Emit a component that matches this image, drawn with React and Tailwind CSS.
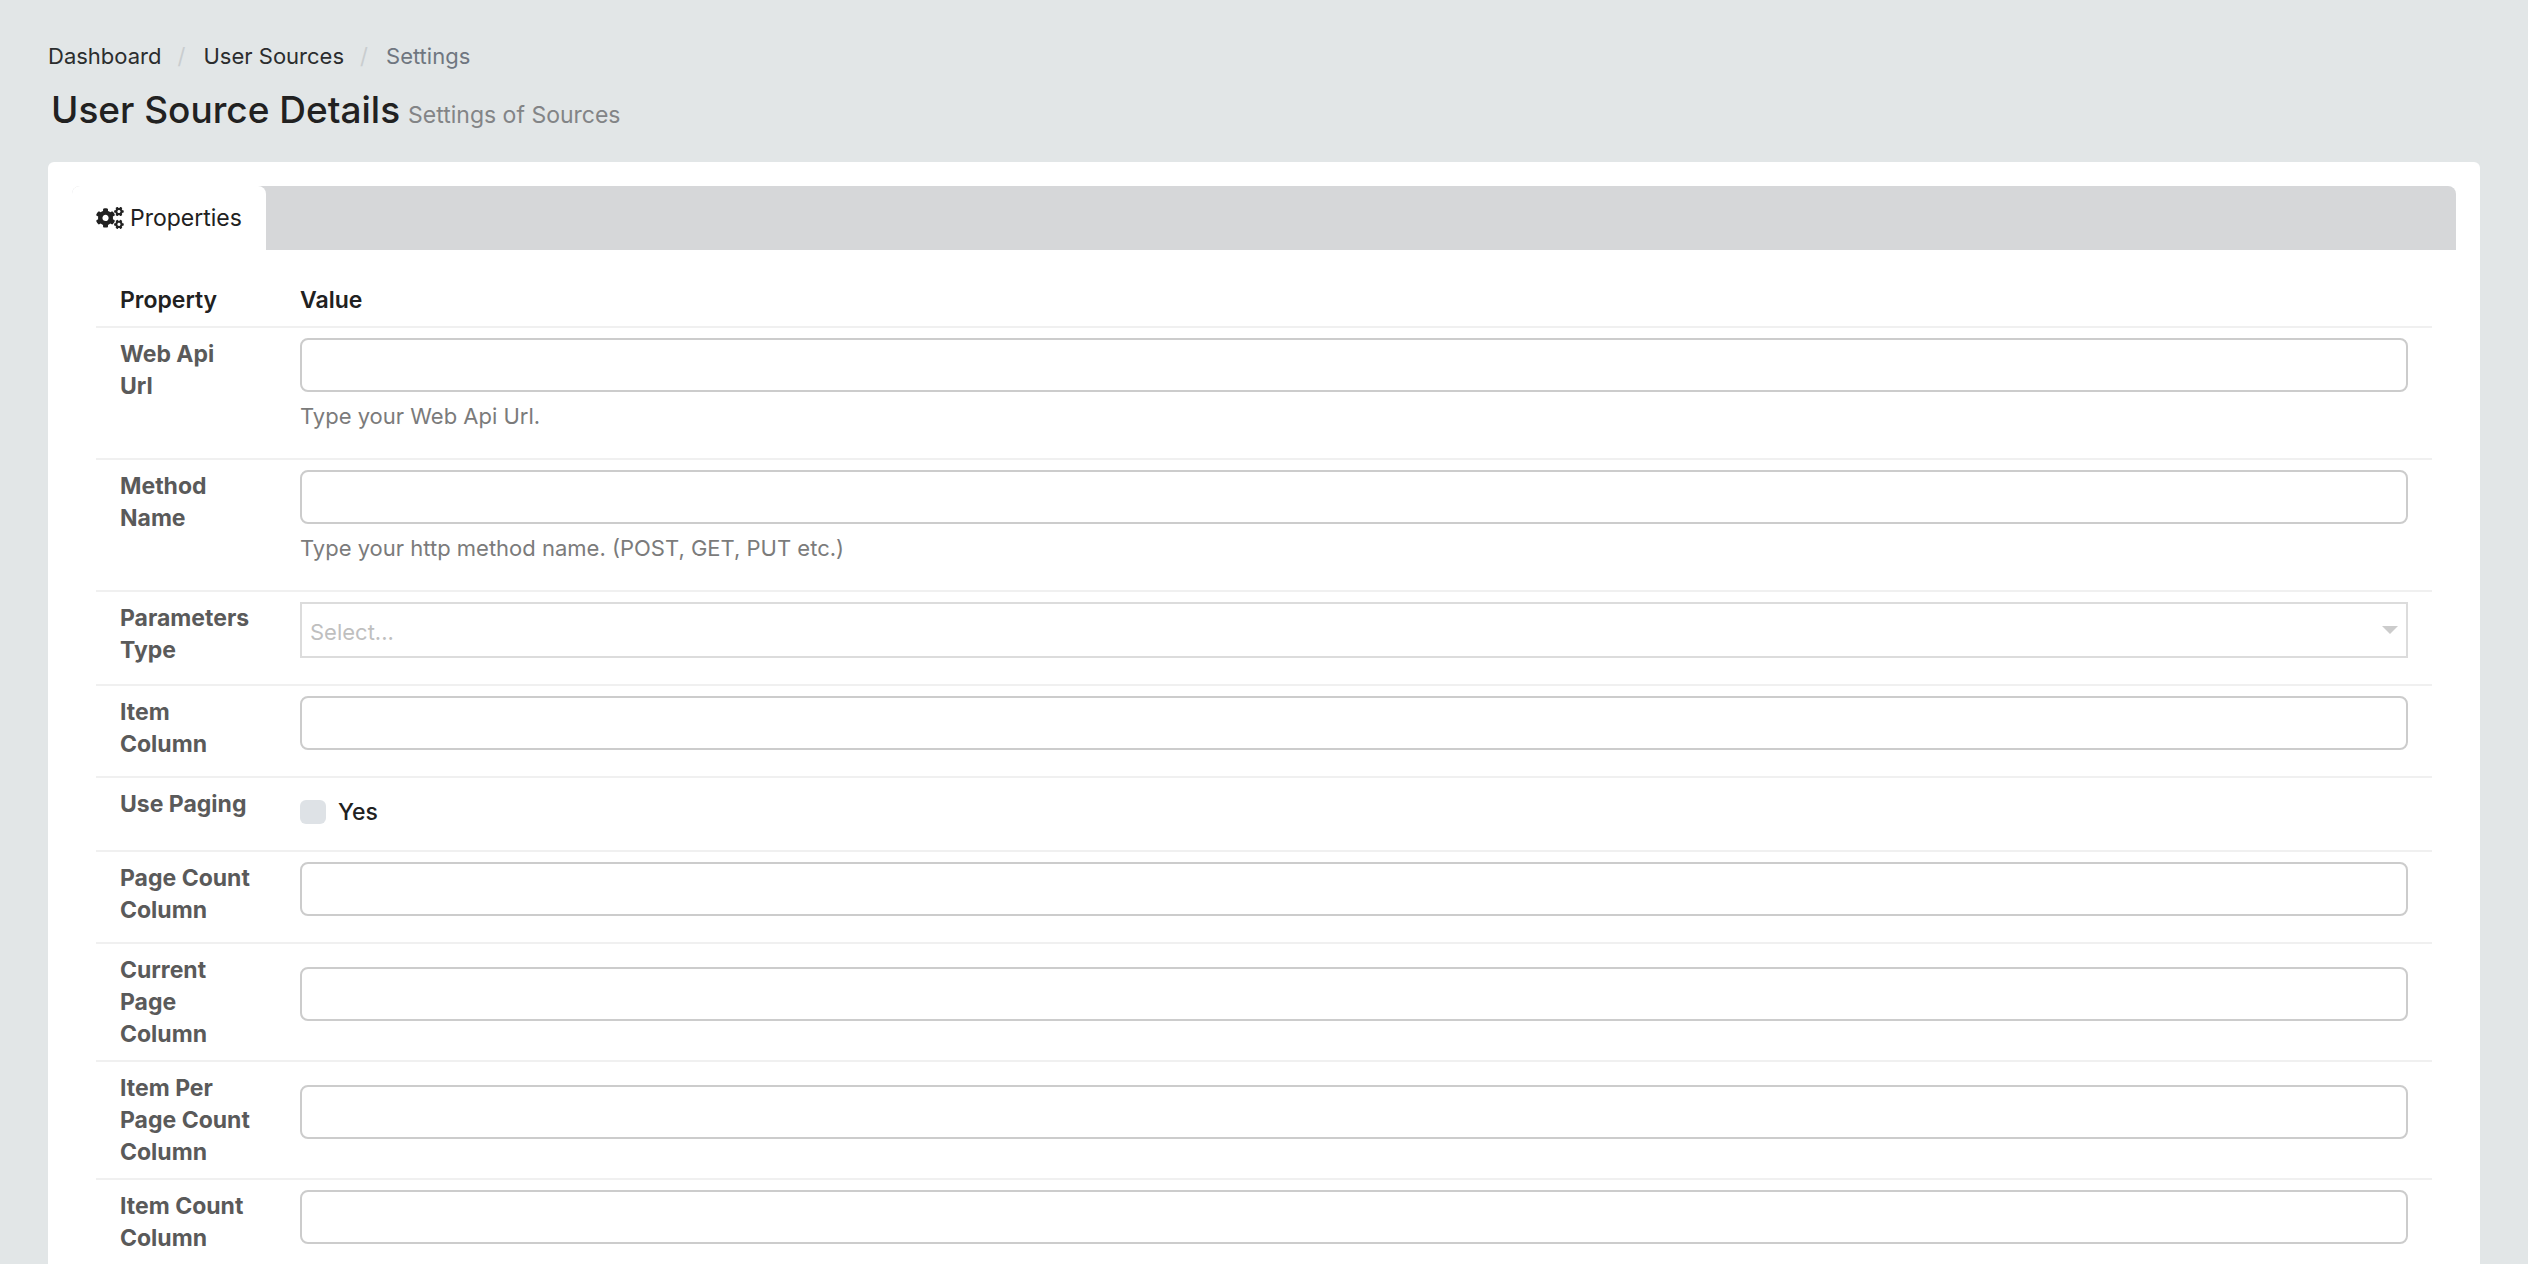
import { FaCogs } from "react-icons/fa"

const properties = [
  { id: "webApiUrl", label: "Web Api\nUrl", type: "text", hint: "Type your Web Api Url." },
  {
    id: "methodName",
    label: "Method Name",
    type: "text",
    hint: "Type your http method name. (POST, GET, PUT etc.)",
  },
  { id: "parametersType", label: "Parameters Type", type: "select" },
  { id: "itemColumn", label: "Item Column", type: "text" },
  { id: "usePaging", label: "Use Paging", type: "checkbox" },
  { id: "pageCountColumn", label: "Page Count Column", type: "text" },
  { id: "currentPageColumn", label: "Current Page Column", type: "text" },
  { id: "itemPerPageCountColumn", label: "Item Per Page Count Column", type: "text" },
  { id: "itemCountColumn", label: "Item Count Column", type: "text" },
]

function Breadcrumb() {
  return (
    <nav aria-label="breadcrumb">
      <ol className="flex text-[#2b2d2e]">
        <li>
          <a href="#dashboard">Dashboard</a>
        </li>
        <li className="flex">
          <span className="w-[42px] pl-4 text-[#c9cdcf]">/</span>
          <a href="#sources">User Sources</a>
        </li>
        <li className="flex text-[#6f7680]" aria-current="page">
          <span className="w-[42px] pl-4 text-[#c9cdcf]">/</span>
          Settings
        </li>
      </ol>
    </nav>
  )
}

function SelectField({ id }) {
  return (
    <div className="relative mb-4">
      <select
        id={id}
        defaultValue=""
        className="block w-full h-14 appearance-none border-2 border-[#dcdcdc] bg-white pl-2 pr-10 pt-1 text-[#bfbfbf] outline-none"
      >
        <option value="">Select...</option>
      </select>
      <svg
        className="absolute right-2.5 top-6 w-4 h-2 pointer-events-none"
        viewBox="0 0 16 8"
        fill="#cccccc"
      >
        <path d="M0 0h16L8 8z" />
      </svg>
    </div>
  )
}

function CheckboxField({ id }) {
  return (
    <label className="flex items-center gap-3 pt-2 pb-3 text-[23px] font-medium text-[#212121]">
      <input
        id={id}
        type="checkbox"
        className="w-[26px] h-6 appearance-none rounded-md bg-[#dee2e6] checked:bg-[#2196f3]"
      />
      Yes
    </label>
  )
}

function TextField({ id, hint }) {
  return (
    <div className="mb-4">
      <input
        id={id}
        type="text"
        className="block w-full h-[54px] rounded-lg border-2 border-[#cccccc] bg-white px-4 outline-none focus:border-[#8bbcf0]"
      />
      {hint && <p className="mt-2 text-[#7b7b7b]">{hint}</p>}
    </div>
  )
}

function PropertyRow({ id, label, type, hint }) {
  return (
    <tr className="border-t-2 border-[#f0f0f0]">
      <th
        scope="row"
        className="pl-6 pr-4 py-2.5 text-left align-top text-[23px] font-bold text-[#5a5a5a]"
      >
        <label htmlFor={id} className="block whitespace-pre-line">
          {label}
        </label>
      </th>
      <td className="px-6 py-2.5 align-middle">
        {type === "text" && <TextField id={id} hint={hint} />}
        {type === "select" && <SelectField id={id} />}
        {type === "checkbox" && <CheckboxField id={id} />}
      </td>
    </tr>
  )
}

export default function App() {
  return (
    <div className="min-h-screen bg-[#e2e6e7] px-12 pt-10 font-['Inter',sans-serif] text-[22px] leading-8 text-[#212121]">
      <Breadcrumb />

      <h1 className="flex items-baseline gap-2 px-[3px] pt-3.5 pb-7 text-[37px] leading-[48px] font-medium">
        User Source Details
        <small className="text-[23px] leading-8 font-normal text-[#828486]">
          Settings of Sources
        </small>
      </h1>

      <main className="rounded-md bg-white p-6">
        {/* TABS */}
        <div role="tablist" className="flex h-16 rounded-t-lg bg-[#d6d7d9]">
          <button
            type="button"
            role="tab"
            aria-selected="true"
            className="flex items-center gap-1.5 rounded-t-lg bg-white px-6 text-[23px]"
          >
            <FaCogs className="w-7 h-[22px]" />
            Properties
          </button>
        </div>

        {/* PROPERTIES */}
        <div className="p-6">
          <table className="w-full table-fixed border-collapse">
            <colgroup>
              <col className="w-[180px]" />
              <col />
            </colgroup>
            <thead>
              <tr className="text-left text-[23px]">
                <th className="px-6 py-2.5 font-semibold">Property</th>
                <th className="px-6 py-2.5 font-semibold">Value</th>
              </tr>
            </thead>
            <tbody>
              {properties.map((property) => (
                <PropertyRow key={property.id} {...property} />
              ))}
            </tbody>
          </table>
        </div>
      </main>
    </div>
  )
}
